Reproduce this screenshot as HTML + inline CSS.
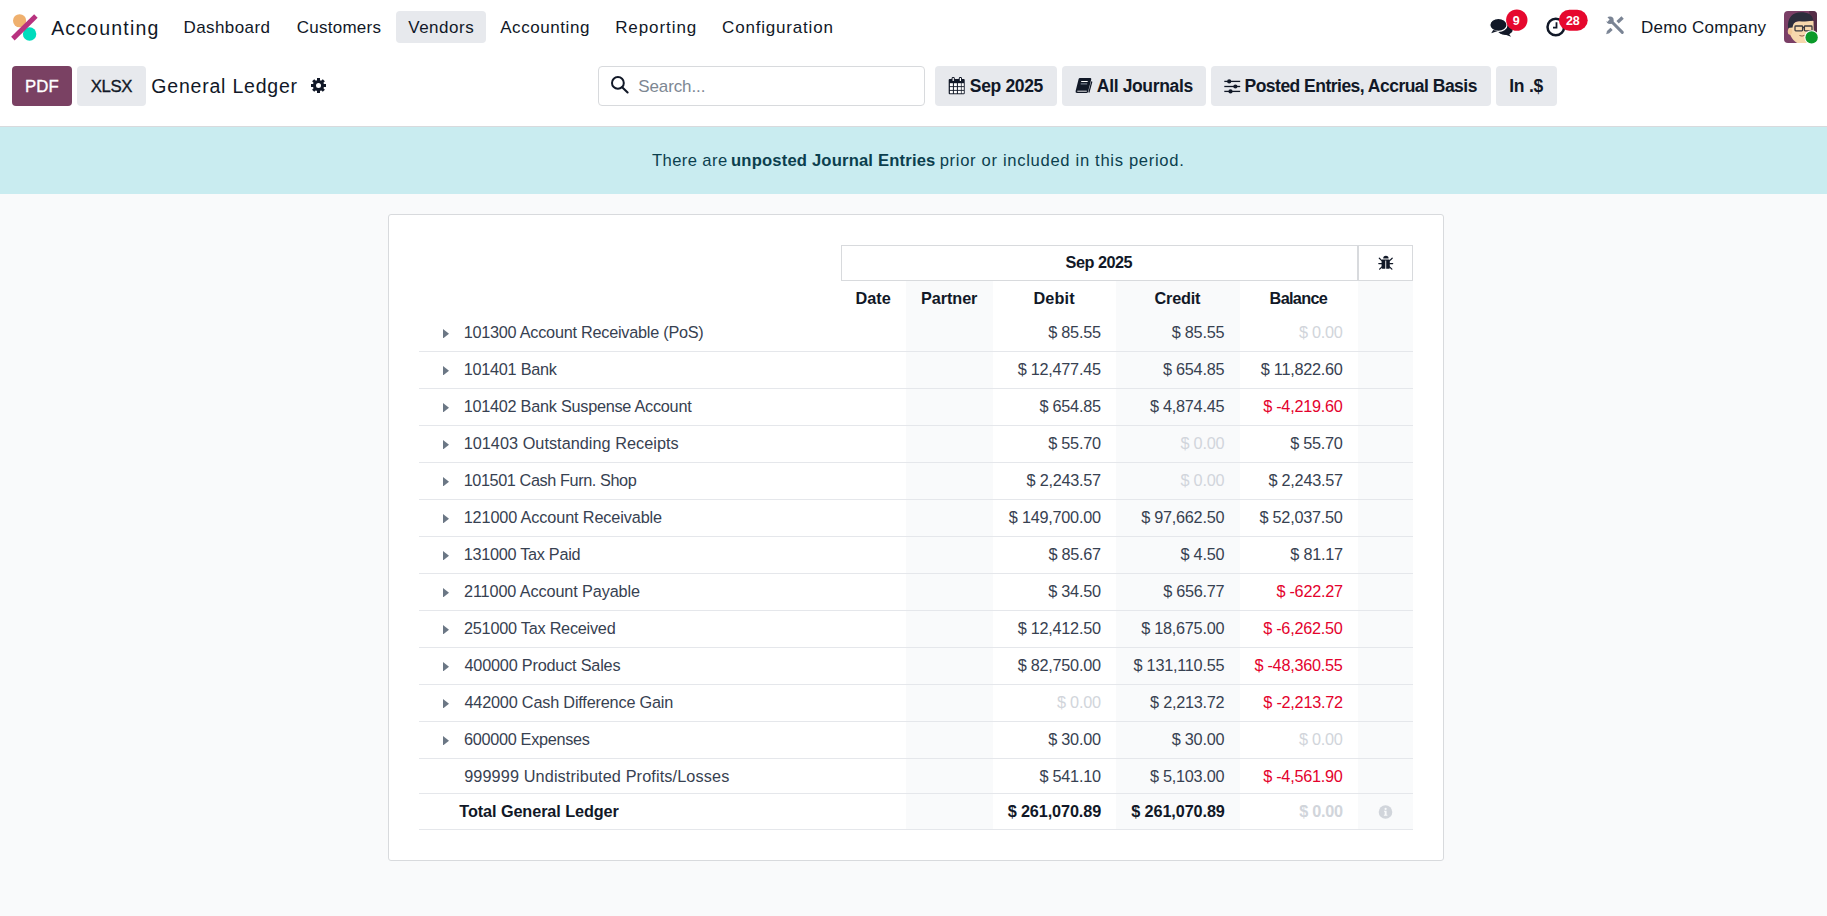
<!DOCTYPE html>
<html><head><meta charset="utf-8"><style>
html,body{margin:0;padding:0}
body{width:1827px;height:916px;position:relative;overflow:hidden;background:#f9fafb;font-family:"Liberation Sans",sans-serif}
.ab{position:absolute}
.t{position:absolute;white-space:nowrap;line-height:1}
.hl{position:absolute;left:419px;width:994px;height:1px;background:#e5e7eb}

</style></head><body>
<div class="ab" style="left:0;top:0;width:1827px;height:126px;background:#fff"></div>
<div class="ab" style="left:0;top:126px;width:1827px;height:1px;background:#d8dadd"></div>
<div class="ab" style="left:0;top:127px;width:1827px;height:67px;background:#c9ecf0"></div>
<div class="ab" style="left:396px;top:11px;width:90px;height:32px;background:#e7e9ed;border-radius:4px"></div>
<div class="ab" style="left:12px;top:66px;width:60px;height:40px;background:#7a4163;border-radius:4px"></div>
<div class="ab" style="left:77px;top:66px;width:69px;height:40px;background:#e7e9ed;border-radius:4px"></div>
<div class="ab" style="left:598px;top:66px;width:325px;height:38px;border:1px solid #d8dadd;border-radius:4px;background:#fff"></div>
<div class="ab" style="left:935px;top:66px;width:122px;height:40px;background:#e7e9ed;border-radius:4px"></div>
<div class="ab" style="left:1062px;top:66px;width:144px;height:40px;background:#e7e9ed;border-radius:4px"></div>
<div class="ab" style="left:1211px;top:66px;width:280px;height:40px;background:#e7e9ed;border-radius:4px"></div>
<div class="ab" style="left:1496px;top:66px;width:61px;height:40px;background:#e7e9ed;border-radius:4px"></div>
<div class="ab" style="left:388px;top:214px;width:1054px;height:645px;border:1px solid #d8dadd;border-radius:3px;background:#fff"></div>
<div class="ab" style="left:906px;top:281px;width:87px;height:548px;background:#f9fafb"></div>
<div class="ab" style="left:1116px;top:281px;width:124px;height:548px;background:#f9fafb"></div>
<div class="ab" style="left:1358px;top:281px;width:55px;height:548px;background:#f9fafb"></div>
<div class="ab" style="left:841px;top:245px;width:515px;height:34px;border:1px solid #d8dadd"></div>
<div class="ab" style="left:1357px;top:245px;width:53px;height:34px;border:1px solid #d8dadd;border-left-width:2px"></div>
<div class="hl" style="top:351px"></div>
<div class="hl" style="top:388px"></div>
<div class="hl" style="top:425px"></div>
<div class="hl" style="top:462px"></div>
<div class="hl" style="top:499px"></div>
<div class="hl" style="top:536px"></div>
<div class="hl" style="top:573px"></div>
<div class="hl" style="top:610px"></div>
<div class="hl" style="top:647px"></div>
<div class="hl" style="top:684px"></div>
<div class="hl" style="top:721px"></div>
<div class="hl" style="top:758px"></div>
<div class="hl" style="top:793px"></div>
<div class="hl" style="top:829px"></div>
<svg class="ab" style="left:443px;top:328.85px" width="6" height="9.5" viewBox="0 0 6 9.5"><path d="M0 0L6 4.75L0 9.5Z" fill="#6b7785"/></svg>
<svg class="ab" style="left:443px;top:365.85px" width="6" height="9.5" viewBox="0 0 6 9.5"><path d="M0 0L6 4.75L0 9.5Z" fill="#6b7785"/></svg>
<svg class="ab" style="left:443px;top:402.85px" width="6" height="9.5" viewBox="0 0 6 9.5"><path d="M0 0L6 4.75L0 9.5Z" fill="#6b7785"/></svg>
<svg class="ab" style="left:443px;top:439.85px" width="6" height="9.5" viewBox="0 0 6 9.5"><path d="M0 0L6 4.75L0 9.5Z" fill="#6b7785"/></svg>
<svg class="ab" style="left:443px;top:476.85px" width="6" height="9.5" viewBox="0 0 6 9.5"><path d="M0 0L6 4.75L0 9.5Z" fill="#6b7785"/></svg>
<svg class="ab" style="left:443px;top:513.85px" width="6" height="9.5" viewBox="0 0 6 9.5"><path d="M0 0L6 4.75L0 9.5Z" fill="#6b7785"/></svg>
<svg class="ab" style="left:443px;top:550.85px" width="6" height="9.5" viewBox="0 0 6 9.5"><path d="M0 0L6 4.75L0 9.5Z" fill="#6b7785"/></svg>
<svg class="ab" style="left:443px;top:587.85px" width="6" height="9.5" viewBox="0 0 6 9.5"><path d="M0 0L6 4.75L0 9.5Z" fill="#6b7785"/></svg>
<svg class="ab" style="left:443px;top:624.85px" width="6" height="9.5" viewBox="0 0 6 9.5"><path d="M0 0L6 4.75L0 9.5Z" fill="#6b7785"/></svg>
<svg class="ab" style="left:443px;top:661.85px" width="6" height="9.5" viewBox="0 0 6 9.5"><path d="M0 0L6 4.75L0 9.5Z" fill="#6b7785"/></svg>
<svg class="ab" style="left:443px;top:698.85px" width="6" height="9.5" viewBox="0 0 6 9.5"><path d="M0 0L6 4.75L0 9.5Z" fill="#6b7785"/></svg>
<svg class="ab" style="left:443px;top:735.85px" width="6" height="9.5" viewBox="0 0 6 9.5"><path d="M0 0L6 4.75L0 9.5Z" fill="#6b7785"/></svg>
<!-- logo -->
<svg class="ab" style="left:0;top:0" width="50" height="52" viewBox="0 0 50 52">
<circle cx="19.6" cy="20.75" r="6.6" fill="#efb06e"/>
<circle cx="29.6" cy="34" r="6.7" fill="#00dcbd"/>
<line x1="12.9" y1="38.6" x2="35.9" y2="16" stroke="#b8327f" stroke-width="5" stroke-linecap="butt"/>
</svg>
<!-- chat icon -->
<svg class="ab" style="left:1480px;top:0" width="60" height="52" viewBox="1480 0 60 52">
<ellipse cx="1505.2" cy="29.4" rx="7.6" ry="5.6" fill="#111827"/>
<path d="M1508.5 33 L1511 36.8 L1505 34.6Z" fill="#111827"/>
<ellipse cx="1498.4" cy="24.9" rx="8.6" ry="6.5" fill="#111827" stroke="#fff" stroke-width="1.2"/>
<path d="M1493.2 30 L1491.2 33.2 L1497.8 31Z" fill="#111827"/>
<circle cx="1516.8" cy="20.1" r="10.7" fill="#e6082e"/>
</svg>
<!-- clock icon -->
<svg class="ab" style="left:1540px;top:0" width="52" height="52" viewBox="1540 0 52 52">
<circle cx="1555.8" cy="27" r="8.3" stroke="#111827" stroke-width="2.5" fill="none"/>
<path d="M1556.5 22.3 V27.7 H1553" stroke="#111827" stroke-width="1.8" fill="none"/>
<rect x="1558.9" y="9.7" width="28.8" height="21" rx="10.5" fill="#e6082e"/>
</svg>
<!-- tools icon -->
<svg class="ab" style="left:1600px;top:10px" width="30" height="30" viewBox="1600 10 30 30">
<g stroke="#7a8494" fill="none">
<line x1="1612" y1="22" x2="1622.3" y2="32.4" stroke-width="3" stroke-linecap="round"/>
<line x1="1617.6" y1="22.2" x2="1622.6" y2="17.6" stroke-width="3.4"/>
<path d="M1611.6 28.8 L1607.8 32.4" stroke-width="3.2"/>
</g>
<circle cx="1610" cy="20.2" r="3.7" fill="#7a8494"/>
<path d="M1606 15.8 L1609.6 19.6 L1607.2 22 L1603.4 18.4Z" fill="#fff"/>
<path d="M1606.2 34.2 L1607 31.2 L1609 33.2Z" fill="#7a8494"/>
</svg>
<!-- avatar -->
<svg class="ab" style="left:1784px;top:10.8px" width="34" height="33" viewBox="0 0 34 33">
<defs><clipPath id="avc"><rect x="0" y="0" width="33" height="32" rx="4"/></clipPath></defs>
<g clip-path="url(#avc)">
<rect x="0" y="0" width="33" height="32" fill="#7a3f66"/>
<path d="M25 0 H33 V32 H28 Z" fill="#4a2a3e" opacity="0.75"/>
<path d="M4.8 15 C4.5 24 9 31.5 16 33 L30 33 L29.5 10 C24 8.5 12 8.5 4.8 15Z" fill="#f6d8ad"/>
<ellipse cx="6" cy="20.5" rx="2.2" ry="3.2" fill="#f0c897"/>
<path d="M4 17 C3.2 6 9 1.2 17 1.2 C23.5 1.2 28.8 3.5 29 9 C27 10.5 22 10.6 15 10.2 C11.5 10.2 9 12 8.6 16.5 Z" fill="#2b2d3c"/>
<g fill="none" stroke="#3a3a40" stroke-width="1.3"><rect x="11" y="15" width="7.6" height="4.8" rx="0.8"/><rect x="20.4" y="15" width="7.6" height="4.8" rx="0.8"/><line x1="18.6" y1="16.5" x2="20.4" y2="16.5"/></g>
<path d="M15.5 24.5 Q18 25.8 20.8 24.3" stroke="#8a5a48" stroke-width="1" fill="none"/>
</g>
</svg>
<svg class="ab" style="left:1803px;top:29px" width="17" height="17" viewBox="0 0 17 17">
<circle cx="8.6" cy="8.4" r="7.2" fill="#fff"/><circle cx="8.6" cy="8.4" r="6.2" fill="#0b9a2a"/>
</svg>
<!-- gear -->
<svg class="ab" style="left:310px;top:77px" width="17" height="17" viewBox="-8.5 -8.5 17 17">
<g fill="#111827">
<circle r="5.6"/>
<rect x="-1.5" y="-7.5" width="3" height="3" transform="rotate(0)"/><rect x="-1.5" y="-7.5" width="3" height="3" transform="rotate(45)"/><rect x="-1.5" y="-7.5" width="3" height="3" transform="rotate(90)"/><rect x="-1.5" y="-7.5" width="3" height="3" transform="rotate(135)"/><rect x="-1.5" y="-7.5" width="3" height="3" transform="rotate(180)"/><rect x="-1.5" y="-7.5" width="3" height="3" transform="rotate(225)"/><rect x="-1.5" y="-7.5" width="3" height="3" transform="rotate(270)"/><rect x="-1.5" y="-7.5" width="3" height="3" transform="rotate(315)"/>
</g>
<circle r="2.5" fill="#fff"/>
</svg>
<!-- magnifier -->
<svg class="ab" style="left:608px;top:73px" width="24" height="24" viewBox="608 73 24 24">
<circle cx="617.9" cy="82.9" r="5.9" stroke="#111827" stroke-width="2" fill="none"/>
<line x1="622.2" y1="87.2" x2="627.6" y2="92.4" stroke="#111827" stroke-width="2.1" stroke-linecap="round"/>
</svg>
<!-- calendar -->
<svg class="ab" style="left:944px;top:72px" width="26" height="26" viewBox="944 72 26 26">
<rect x="948.7" y="79" width="16" height="15.2" rx="1" fill="#111827"/>
<g fill="#fff">
<rect x="949.9" y="83.2" width="3" height="3"/><rect x="953.9" y="83.2" width="3" height="3"/><rect x="957.9" y="83.2" width="3" height="3"/><rect x="961.6" y="83.2" width="2.2" height="3"/>
<rect x="949.9" y="87.1" width="3" height="2.8"/><rect x="953.9" y="87.1" width="3" height="2.8"/><rect x="957.9" y="87.1" width="3" height="2.8"/><rect x="961.6" y="87.1" width="2.2" height="2.8"/>
<rect x="949.9" y="90.8" width="3" height="2.5"/><rect x="953.9" y="90.8" width="3" height="2.5"/><rect x="957.9" y="90.8" width="3" height="2.5"/><rect x="961.6" y="90.8" width="2.2" height="2.5"/>
</g>
<rect x="951.6" y="77" width="3.2" height="5" rx="1.4" fill="#111827"/><rect x="958.8" y="77" width="3.2" height="5" rx="1.4" fill="#111827"/>
<rect x="952.6" y="78" width="1.2" height="3" fill="#fff"/><rect x="959.8" y="78" width="1.2" height="3" fill="#fff"/>
</svg>
<!-- book -->
<svg class="ab" style="left:1072px;top:72px" width="26" height="26" viewBox="1072 72 26 26">
<path d="M1079.8 78 L1090.5 78 Q1091.5 78.3 1091.2 79.5 L1088 92 Q1087.7 93 1086.5 93 L1077 93 Q1075.2 92.8 1075.6 91 L1078.6 79 Q1079 78 1079.8 78Z" fill="#111827"/>
<path d="M1091.8 81.5 L1088.9 92.5" stroke="#111827" stroke-width="1.2"/>
<rect x="1081.2" y="81" width="6.5" height="1" fill="#fff"/>
<rect x="1080.7" y="83.4" width="6.5" height="1" fill="#8a93a3"/>
<path d="M1077.3 91.2 L1086.8 91.2" stroke="#fff" stroke-width="0.9"/>
</svg>
<!-- sliders -->
<svg class="ab" style="left:1220px;top:72px" width="26" height="26" viewBox="1220 72 26 26">
<g stroke="#111827" stroke-width="1.3"><line x1="1224.3" y1="81.4" x2="1240.2" y2="81.4"/><line x1="1224.3" y1="86.5" x2="1240.2" y2="86.5"/><line x1="1224.3" y1="91.4" x2="1240.2" y2="91.4"/></g>
<g fill="#111827"><circle cx="1229.2" cy="81.4" r="2.1"/><circle cx="1235.4" cy="86.5" r="2.1"/><circle cx="1230.5" cy="91.4" r="2.1"/></g>
</svg>
<!-- bug -->
<svg class="ab" style="left:1373px;top:250px" width="26" height="26" viewBox="1373 250 26 26">
<path d="M1383.2 258.4 A2.7 2.6 0 0 1 1388.6 258.4Z" fill="#111827"/>
<rect x="1381.6" y="259.6" width="8.2" height="9.2" rx="0.8" fill="#111827"/>
<rect x="1385.3" y="260.6" width="0.9" height="8.4" fill="#fff"/>
<g stroke="#111827" stroke-width="1.2" stroke-linecap="round">
<line x1="1379.3" y1="258.2" x2="1381.8" y2="260.6"/><line x1="1392.2" y1="258.2" x2="1389.7" y2="260.6"/>
<line x1="1378.8" y1="263.6" x2="1381.8" y2="263.6"/><line x1="1392.7" y1="263.6" x2="1389.7" y2="263.6"/>
<line x1="1379.6" y1="269.2" x2="1382" y2="266.8"/><line x1="1391.9" y1="269.2" x2="1389.5" y2="266.8"/>
</g>
</svg>
<!-- info -->
<svg class="ab" style="left:1375px;top:802px" width="22" height="22" viewBox="1375 802 22 22">
<circle cx="1385.5" cy="812" r="6.8" fill="#d1d5db"/>
<circle cx="1385.6" cy="808.9" r="1.1" fill="#f9fafb"/>
<path d="M1384 810.8 H1386.6 V814.7 H1387.4 V815.7 H1383.9 V814.7 H1384.7 V811.8 H1384Z" fill="#f9fafb"/>
</svg>

<span class="t" style="left:51.20px;top:19.00px;font-size:19.5px;font-weight:400;color:#111827;letter-spacing:1.179px;">Accounting</span>
<span class="t" style="left:183.44px;top:19.00px;font-size:17px;font-weight:400;color:#111827;letter-spacing:0.419px;">Dashboard</span>
<span class="t" style="left:296.65px;top:19.00px;font-size:17px;font-weight:400;color:#111827;letter-spacing:0.272px;">Customers</span>
<span class="t" style="left:408.20px;top:19.00px;font-size:17px;font-weight:400;color:#111827;letter-spacing:0.538px;">Vendors</span>
<span class="t" style="left:500.20px;top:19.00px;font-size:17px;font-weight:400;color:#111827;letter-spacing:0.571px;">Accounting</span>
<span class="t" style="left:615.14px;top:19.00px;font-size:17px;font-weight:400;color:#111827;letter-spacing:0.925px;">Reporting</span>
<span class="t" style="left:722.05px;top:19.00px;font-size:17px;font-weight:400;color:#111827;letter-spacing:0.807px;">Configuration</span>
<span class="t" style="left:1641.04px;top:19.00px;font-size:17px;font-weight:400;color:#111827;letter-spacing:0.203px;">Demo Company</span>
<span class="t" style="left:1512.86px;top:15.00px;font-size:12.5px;font-weight:700;color:#ffffff;letter-spacing:0.000px;">9</span>
<span class="t" style="left:1566.08px;top:15.00px;font-size:12.5px;font-weight:700;color:#ffffff;letter-spacing:-0.302px;">28</span>
<span class="t" style="left:24.96px;top:79.00px;font-size:16.75px;font-weight:400;color:#ffffff;letter-spacing:0.128px;-webkit-text-stroke:0.35px #fff">PDF</span>
<span class="t" style="left:90.77px;top:79.00px;font-size:16.75px;font-weight:400;color:#111827;letter-spacing:-0.371px;-webkit-text-stroke:0.35px #111827">XLSX</span>
<span class="t" style="left:151.33px;top:77.00px;font-size:19.5px;font-weight:400;color:#111827;letter-spacing:0.786px;">General Ledger</span>
<span class="t" style="left:638.32px;top:78.00px;font-size:17px;font-weight:400;color:#7d8793;letter-spacing:-0.120px;">Search...</span>
<span class="t" style="left:969.85px;top:78.00px;font-size:17.5px;font-weight:700;color:#111827;letter-spacing:-0.354px;">Sep 2025</span>
<span class="t" style="left:1096.85px;top:78.00px;font-size:17.5px;font-weight:700;color:#111827;letter-spacing:-0.353px;">All Journals</span>
<span class="t" style="left:1244.55px;top:78.00px;font-size:17.5px;font-weight:700;color:#111827;letter-spacing:-0.519px;">Posted Entries, Accrual Basis</span>
<span class="t" style="left:1509.15px;top:78.00px;font-size:17.5px;font-weight:700;color:#111827;letter-spacing:-0.213px;">In .$</span>
<span class="t" style="left:651.97px;top:153.00px;font-size:16.6px;font-weight:400;color:#0b3f4e;letter-spacing:0.408px;">There are</span>
<span class="t" style="left:731.00px;top:153.00px;font-size:16.6px;font-weight:700;color:#0b3f4e;letter-spacing:0.185px;">unposted Journal Entries</span>
<span class="t" style="left:939.70px;top:153.00px;font-size:16.6px;font-weight:400;color:#0b3f4e;letter-spacing:0.681px;">prior or included in this period.</span>
<span class="t" style="left:1065.58px;top:254.00px;font-size:16.25px;font-weight:700;color:#111827;letter-spacing:-0.502px;">Sep 2025</span>
<span class="t" style="left:855.48px;top:290.00px;font-size:16.25px;font-weight:700;color:#111827;letter-spacing:0.026px;">Date</span>
<span class="t" style="left:921.12px;top:290.00px;font-size:16.25px;font-weight:700;color:#111827;letter-spacing:-0.096px;">Partner</span>
<span class="t" style="left:1033.38px;top:290.00px;font-size:16.25px;font-weight:700;color:#111827;letter-spacing:0.175px;">Debit</span>
<span class="t" style="left:1154.55px;top:290.00px;font-size:16.25px;font-weight:700;color:#111827;letter-spacing:-0.210px;">Credit</span>
<span class="t" style="left:1269.58px;top:290.00px;font-size:16.25px;font-weight:700;color:#111827;letter-spacing:-0.671px;">Balance</span>
<span class="t" style="left:463.66px;top:324.00px;font-size:16.25px;font-weight:400;color:#374151;letter-spacing:-0.247px;">101300 Account Receivable (PoS)</span>
<span class="t" style="left:1048.27px;top:324.00px;font-size:16.25px;font-weight:400;color:#374151;letter-spacing:-0.250px;">$ 85.55</span>
<span class="t" style="left:1171.77px;top:324.00px;font-size:16.25px;font-weight:400;color:#374151;letter-spacing:-0.250px;">$ 85.55</span>
<span class="t" style="left:1298.96px;top:324.00px;font-size:16.25px;font-weight:400;color:#d1d5db;letter-spacing:-0.250px;">$ 0.00</span>
<span class="t" style="left:463.66px;top:361.00px;font-size:16.25px;font-weight:400;color:#374151;letter-spacing:-0.250px;">101401 Bank</span>
<span class="t" style="left:1017.64px;top:361.00px;font-size:16.25px;font-weight:400;color:#374151;letter-spacing:-0.250px;">$ 12,477.45</span>
<span class="t" style="left:1162.98px;top:361.00px;font-size:16.25px;font-weight:400;color:#374151;letter-spacing:-0.250px;">$ 654.85</span>
<span class="t" style="left:1260.75px;top:361.00px;font-size:16.25px;font-weight:400;color:#374151;letter-spacing:-0.250px;">$ 11,822.60</span>
<span class="t" style="left:463.66px;top:398.00px;font-size:16.25px;font-weight:400;color:#374151;letter-spacing:-0.255px;">101402 Bank Suspense Account</span>
<span class="t" style="left:1039.48px;top:398.00px;font-size:16.25px;font-weight:400;color:#374151;letter-spacing:-0.250px;">$ 654.85</span>
<span class="t" style="left:1149.93px;top:398.00px;font-size:16.25px;font-weight:400;color:#374151;letter-spacing:-0.250px;">$ 4,874.45</span>
<span class="t" style="left:1263.17px;top:398.00px;font-size:16.25px;font-weight:400;color:#e4022d;letter-spacing:-0.250px;">$ -4,219.60</span>
<span class="t" style="left:463.66px;top:435.00px;font-size:16.25px;font-weight:400;color:#374151;letter-spacing:0.035px;">101403 Outstanding Receipts</span>
<span class="t" style="left:1048.27px;top:435.00px;font-size:16.25px;font-weight:400;color:#374151;letter-spacing:-0.250px;">$ 55.70</span>
<span class="t" style="left:1180.56px;top:435.00px;font-size:16.25px;font-weight:400;color:#d1d5db;letter-spacing:-0.250px;">$ 0.00</span>
<span class="t" style="left:1290.17px;top:435.00px;font-size:16.25px;font-weight:400;color:#374151;letter-spacing:-0.250px;">$ 55.70</span>
<span class="t" style="left:463.66px;top:472.00px;font-size:16.25px;font-weight:400;color:#374151;letter-spacing:-0.403px;">101501 Cash Furn. Shop</span>
<span class="t" style="left:1026.59px;top:472.00px;font-size:16.25px;font-weight:400;color:#374151;letter-spacing:-0.250px;">$ 2,243.57</span>
<span class="t" style="left:1180.56px;top:472.00px;font-size:16.25px;font-weight:400;color:#d1d5db;letter-spacing:-0.250px;">$ 0.00</span>
<span class="t" style="left:1268.49px;top:472.00px;font-size:16.25px;font-weight:400;color:#374151;letter-spacing:-0.250px;">$ 2,243.57</span>
<span class="t" style="left:463.66px;top:509.00px;font-size:16.25px;font-weight:400;color:#374151;letter-spacing:-0.127px;">121000 Account Receivable</span>
<span class="t" style="left:1008.86px;top:509.00px;font-size:16.25px;font-weight:400;color:#374151;letter-spacing:-0.250px;">$ 149,700.00</span>
<span class="t" style="left:1141.14px;top:509.00px;font-size:16.25px;font-weight:400;color:#374151;letter-spacing:-0.250px;">$ 97,662.50</span>
<span class="t" style="left:1259.54px;top:509.00px;font-size:16.25px;font-weight:400;color:#374151;letter-spacing:-0.250px;">$ 52,037.50</span>
<span class="t" style="left:463.66px;top:546.00px;font-size:16.25px;font-weight:400;color:#374151;letter-spacing:-0.280px;">131000 Tax Paid</span>
<span class="t" style="left:1048.43px;top:546.00px;font-size:16.25px;font-weight:400;color:#374151;letter-spacing:-0.250px;">$ 85.67</span>
<span class="t" style="left:1180.56px;top:546.00px;font-size:16.25px;font-weight:400;color:#374151;letter-spacing:-0.250px;">$ 4.50</span>
<span class="t" style="left:1290.33px;top:546.00px;font-size:16.25px;font-weight:400;color:#374151;letter-spacing:-0.250px;">$ 81.17</span>
<span class="t" style="left:463.99px;top:583.00px;font-size:16.25px;font-weight:400;color:#374151;letter-spacing:-0.123px;">211000 Account Payable</span>
<span class="t" style="left:1048.27px;top:583.00px;font-size:16.25px;font-weight:400;color:#374151;letter-spacing:-0.250px;">$ 34.50</span>
<span class="t" style="left:1163.15px;top:583.00px;font-size:16.25px;font-weight:400;color:#374151;letter-spacing:-0.250px;">$ 656.77</span>
<span class="t" style="left:1276.38px;top:583.00px;font-size:16.25px;font-weight:400;color:#e4022d;letter-spacing:-0.250px;">$ -622.27</span>
<span class="t" style="left:463.99px;top:620.00px;font-size:16.25px;font-weight:400;color:#374151;letter-spacing:-0.237px;">251000 Tax Received</span>
<span class="t" style="left:1017.64px;top:620.00px;font-size:16.25px;font-weight:400;color:#374151;letter-spacing:-0.250px;">$ 12,412.50</span>
<span class="t" style="left:1141.14px;top:620.00px;font-size:16.25px;font-weight:400;color:#374151;letter-spacing:-0.250px;">$ 18,675.00</span>
<span class="t" style="left:1263.17px;top:620.00px;font-size:16.25px;font-weight:400;color:#e4022d;letter-spacing:-0.250px;">$ -6,262.50</span>
<span class="t" style="left:464.48px;top:657.00px;font-size:16.25px;font-weight:400;color:#374151;letter-spacing:-0.200px;">400000 Product Sales</span>
<span class="t" style="left:1017.64px;top:657.00px;font-size:16.25px;font-weight:400;color:#374151;letter-spacing:-0.250px;">$ 82,750.00</span>
<span class="t" style="left:1133.56px;top:657.00px;font-size:16.25px;font-weight:400;color:#374151;letter-spacing:-0.250px;">$ 131,110.55</span>
<span class="t" style="left:1254.38px;top:657.00px;font-size:16.25px;font-weight:400;color:#e4022d;letter-spacing:-0.250px;">$ -48,360.55</span>
<span class="t" style="left:464.48px;top:694.00px;font-size:16.25px;font-weight:400;color:#374151;letter-spacing:-0.191px;">442000 Cash Difference Gain</span>
<span class="t" style="left:1057.06px;top:694.00px;font-size:16.25px;font-weight:400;color:#d1d5db;letter-spacing:-0.250px;">$ 0.00</span>
<span class="t" style="left:1150.09px;top:694.00px;font-size:16.25px;font-weight:400;color:#374151;letter-spacing:-0.250px;">$ 2,213.72</span>
<span class="t" style="left:1263.33px;top:694.00px;font-size:16.25px;font-weight:400;color:#e4022d;letter-spacing:-0.250px;">$ -2,213.72</span>
<span class="t" style="left:463.99px;top:731.00px;font-size:16.25px;font-weight:400;color:#374151;letter-spacing:-0.300px;">600000 Expenses</span>
<span class="t" style="left:1048.27px;top:731.00px;font-size:16.25px;font-weight:400;color:#374151;letter-spacing:-0.250px;">$ 30.00</span>
<span class="t" style="left:1171.77px;top:731.00px;font-size:16.25px;font-weight:400;color:#374151;letter-spacing:-0.250px;">$ 30.00</span>
<span class="t" style="left:1298.96px;top:731.00px;font-size:16.25px;font-weight:400;color:#d1d5db;letter-spacing:-0.250px;">$ 0.00</span>
<span class="t" style="left:464.15px;top:768.00px;font-size:16.25px;font-weight:400;color:#374151;letter-spacing:0.120px;">999999 Undistributed Profits/Losses</span>
<span class="t" style="left:1039.48px;top:768.00px;font-size:16.25px;font-weight:400;color:#374151;letter-spacing:-0.250px;">$ 541.10</span>
<span class="t" style="left:1149.93px;top:768.00px;font-size:16.25px;font-weight:400;color:#374151;letter-spacing:-0.250px;">$ 5,103.00</span>
<span class="t" style="left:1263.17px;top:768.00px;font-size:16.25px;font-weight:400;color:#e4022d;letter-spacing:-0.250px;">$ -4,561.90</span>
<span class="t" style="left:459.34px;top:803.00px;font-size:16.25px;font-weight:700;color:#111827;letter-spacing:-0.096px;">Total General Ledger</span>
<span class="t" style="left:1007.64px;top:803.00px;font-size:16.25px;font-weight:700;color:#111827;letter-spacing:-0.121px;">$ 261,070.89</span>
<span class="t" style="left:1131.24px;top:803.00px;font-size:16.25px;font-weight:700;color:#111827;letter-spacing:-0.112px;">$ 261,070.89</span>
<span class="t" style="left:1299.34px;top:803.00px;font-size:16.25px;font-weight:700;color:#d1d5db;letter-spacing:-0.286px;">$ 0.00</span>
</body></html>
